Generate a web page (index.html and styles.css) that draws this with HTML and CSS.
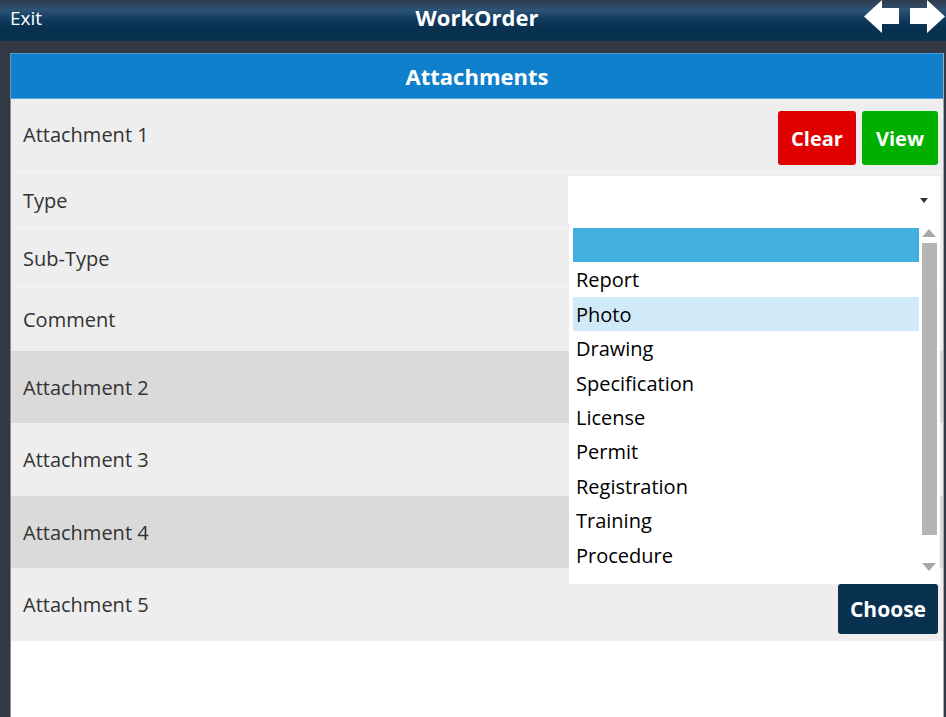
FILE: index.html
```html
<!DOCTYPE html>
<html>
<head>
<meta charset="utf-8">
<link rel="stylesheet" href="styles.css">
</head>
<body>
<header class="topbar">
  <span class="exit">Exit</span>
  <span class="app-title">WorkOrder</span>
  <div class="nav-arrows">
    <svg class="arrow" width="36" height="34" viewBox="0 0 36 34"><path d="M0 16.5 L18 0 L18 8 L35 8 L35 24 L18 24 L18 33 Z" fill="#fff"/></svg>
    <svg class="arrow" width="36" height="34" viewBox="0 0 36 34"><path d="M35 16.5 L17 0 L17 8 L0 8 L0 24 L17 24 L17 33 Z" fill="#fff"/></svg>
  </div>
</header>
<main class="page">
  <section class="panel">
    <div class="panel-title">Attachments</div>
    <div class="row att att-1">
      <span class="label">Attachment 1</span>
      <div class="actions">
        <button class="btn btn-clear">Clear</button>
        <button class="btn btn-view">View</button>
      </div>
    </div>
    <div class="row sub sub-type">
      <span class="label">Type</span>
      <div class="select-wrap">
        <div class="select"><span class="caret"></span></div>
        <div class="dropdown">
          <ul class="options">
            <li class="opt opt-selected">&nbsp;</li>
            <li class="opt">Report</li>
            <li class="opt opt-hover">Photo</li>
            <li class="opt">Drawing</li>
            <li class="opt">Specification</li>
            <li class="opt">License</li>
            <li class="opt">Permit</li>
            <li class="opt">Registration</li>
            <li class="opt">Training</li>
            <li class="opt">Procedure</li>
          </ul>
          <div class="scrollbar">
            <span class="sb-up"></span>
            <span class="sb-thumb"></span>
            <span class="sb-down"></span>
          </div>
        </div>
      </div>
    </div>
    <div class="row sub sub-subtype"><span class="label">Sub-Type</span></div>
    <div class="row sub sub-comment"><span class="label">Comment</span></div>
    <div class="row att alt"><span class="label">Attachment 2</span></div>
    <div class="row att att-3"><span class="label">Attachment 3</span></div>
    <div class="row att alt"><span class="label">Attachment 4</span></div>
    <div class="row att att-5">
      <span class="label">Attachment 5</span>
      <div class="actions">
        <button class="btn btn-choose">Choose</button>
      </div>
    </div>
  </section>
</main>
</body>
</html>
```
FILE: styles.css
```css
* { box-sizing: border-box; }
html, body { height: 100%; }
body {
  margin: 0;
  background: #333944;
  font-family: "Open Sans", "Noto Sans", sans-serif;
  overflow: hidden;
}
.topbar {
  position: relative;
  height: 41px;
  display: flex;
  align-items: center;
  justify-content: center;
  background: linear-gradient(to bottom, #323b4a 0px, #2d5375 10px, #0f3a5e 20px, #08304f 28px, #08304f 41px);
  color: #fff;
}
.exit {
  position: absolute;
  left: 10px;
  top: 5px;
  font-size: 19px;
  line-height: 26px;
}
.app-title {
  font-weight: 700;
  font-size: 22px;
  line-height: 26px;
  margin-top: -8px;
  margin-left: 8px;
}
.nav-arrows {
  position: absolute;
  right: 0;
  top: 0;
  display: flex;
  gap: 10px;
}
.arrow { display: block; }
.page {
  height: calc(100% - 41px);
  padding: 12px 2px 0 10px;
}
.panel {
  height: 100%;
  background: #fff;
  border-left: 1px solid #8a8f96;
  border-right: 1px solid #a8a8a8;
  display: flex;
  flex-direction: column;
}
.panel-title {
  height: 46px;
  background: #0f80cc;
  border-top: 1px solid #4a9bd6;
  border-bottom: 1px solid #5aa6dd;
  color: #fff;
  font-weight: 700;
  font-size: 22px;
  display: flex;
  align-items: center;
  justify-content: center;
  padding-bottom: 1px;
}
.row {
  display: flex;
  align-items: center;
  justify-content: space-between;
  background: #eeeeee;
  padding: 0 5px 0 12px;
  flex: none;
}
.label {
  color: #333;
  font-size: 20px;
}
.att { height: 72px; }
.att-1 .label { margin-top: -1px; }
.att-3, .att-5 { height: 73px; }
.alt { background: #dadada; }
.sub { border-top: 1px solid #f6f6f6; }
.sub-type { height: 57px; position: relative; }
.sub-subtype { height: 58px; }
.sub-subtype .label { padding-top: 1px; }
.sub-comment { height: 65px; }
.actions {
  display: flex;
  gap: 6px;
  align-self: flex-start;
  margin-top: 12px;
}
.att-5 .actions { margin-top: 16px; }
.btn {
  border: none;
  border-radius: 3px;
  color: #fff;
  font-family: "Open Sans", "Noto Sans", sans-serif;
  font-weight: 700;
  font-size: 20px;
  height: 54px;
  padding: 0;
}
.btn-clear { background: #e00000; width: 78px; }
.btn-view { background: #00b000; width: 76px; }
.btn-choose { background: #08304f; width: 100px; height: 50px; font-size: 21px; }
.select-wrap {
  align-self: flex-start;
  margin-top: 4px;
  margin-right: -2px;
  width: 372px;
  position: relative;
}
.select {
  height: 48px;
  background: #fff;
  position: relative;
}
.caret {
  position: absolute;
  right: 12px;
  top: 22px;
  width: 0;
  height: 0;
  border-left: 4px solid transparent;
  border-right: 4px solid transparent;
  border-top: 5px solid #333;
}
.dropdown {
  position: absolute;
  top: 48px;
  left: 1px;
  width: 371px;
  height: 360px;
  background: #fff;
  display: flex;
  padding: 4px 0 0 4px;
  z-index: 5;
}
.options {
  list-style: none;
  margin: 0;
  padding: 0;
  width: 346px;
}
.opt {
  height: 34.4px;
  line-height: 36px;
  padding-left: 3px;
  font-size: 20px;
  color: #000;
}
.opt-selected { background: #42b0e0; }
.opt-hover { background: #d0eaf7; }
.scrollbar {
  position: relative;
  margin-left: 3px;
  width: 15px;
  height: 352px;
}
.sb-up {
  position: absolute;
  left: 0;
  top: 1px;
  border-left: 7.5px solid transparent;
  border-right: 7.5px solid transparent;
  border-bottom: 8px solid #a9a9a9;
}
.sb-thumb {
  position: absolute;
  left: 0;
  top: 15px;
  width: 15px;
  height: 292px;
  background: #b5b5b5;
}
.sb-down {
  position: absolute;
  left: 0;
  top: 335px;
  border-left: 7.5px solid transparent;
  border-right: 7.5px solid transparent;
  border-top: 8px solid #a9a9a9;
}
```
